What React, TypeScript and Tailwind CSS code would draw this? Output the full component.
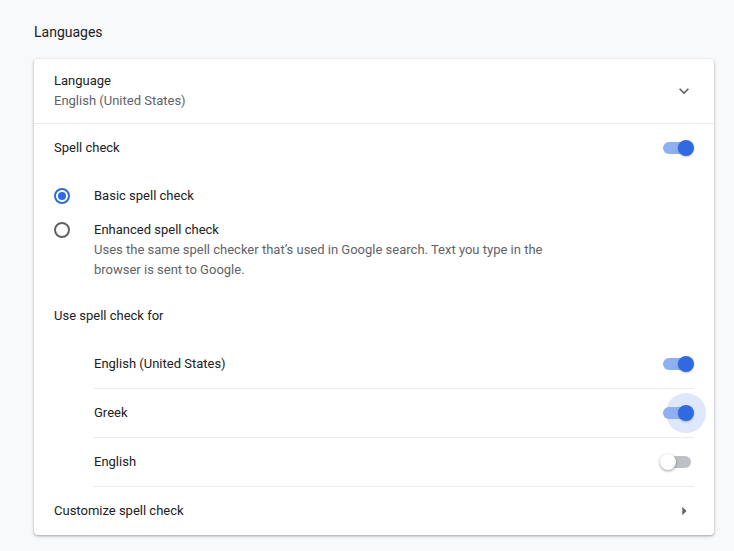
import React from "react";

function Toggle({ on, focus }: { on: boolean; focus?: boolean }) {
  return (
    <div className="relative w-[34px] h-[16px] shrink-0">
      {focus && (
        <div className="absolute w-[40px] h-[40px] rounded-full bg-[#dfe7fb] left-[6px] top-[-12px]" />
      )}
      <div
        className={
          "absolute left-[3px] top-[2px] w-[28px] h-[12px] rounded-full " +
          (on ? "bg-[#8fb0f0]" : "bg-[#bdc1c6]")
        }
      />
      <div
        className={
          "absolute top-0 w-[16px] h-[16px] rounded-full " +
          (on
            ? "left-[18px] bg-[#2f6ae0] shadow-[0_1px_2px_rgba(0,0,0,0.25)]"
            : "left-0 bg-white shadow-[0_1px_3px_rgba(0,0,0,0.4)]")
        }
      />
    </div>
  );
}

function Radio({ checked }: { checked: boolean }) {
  return (
    <div className="w-[40px] shrink-0 flex items-center">
      <div
        className={
          "w-[16px] h-[16px] rounded-full border-2 flex items-center justify-center " +
          (checked ? "border-[#2f6ae0]" : "border-[#5f6368]")
        }
      >
        {checked && <div className="w-[8px] h-[8px] rounded-full bg-[#2f6ae0]" />}
      </div>
    </div>
  );
}

export default function App() {
  return (
    <div
      className="min-h-[551px] w-[734px] bg-[#f8f9fa] text-[13px] text-[#202124]"
      style={{ fontFamily: "Roboto, 'Noto Sans', sans-serif" }}
    >
      <div className="pl-[34px] pt-[22px] pb-[17px] text-[14px] leading-[20px] text-[#202124]">
        Languages
      </div>
      <div className="ml-[34px] w-[680px] bg-white rounded-[4px] shadow-[0_1px_2px_rgba(60,64,67,0.3),0_1px_3px_1px_rgba(60,64,67,0.15)]">
        {/* Language row */}
        <div className="h-[65px] border-b border-[#e8eaed] flex items-center px-[20px]">
          <div className="flex-1 leading-[20px]">
            <div>Language</div>
            <div className="text-[#5f6368]">English (United States)</div>
          </div>
          <svg width="20" height="20" viewBox="0 0 24 24">
            <path d="M16.59 8.59L12 13.17 7.41 8.59 6 10l6 6 6-6z" fill="#5f6368" />
          </svg>
        </div>
        {/* Spell check */}
        <div className="h-[48px] flex items-center px-[20px]">
          <div className="flex-1">Spell check</div>
          <Toggle on />
        </div>
        {/* Radio group */}
        <div className="px-[20px] pt-[14px] pb-[12px] flex flex-col gap-[14px] leading-[20px]">
          <div className="flex items-center">
            <Radio checked />
            <div>Basic spell check</div>
          </div>
          <div className="flex items-start">
            <div className="h-[20px] flex items-center">
              <Radio checked={false} />
            </div>
            <div>
              <div>Enhanced spell check</div>
              <div className="text-[#5f6368] w-[460px]">
                Uses the same spell checker that’s used in Google search. Text you type in the
                browser is sent to Google.
              </div>
            </div>
          </div>
        </div>
        <div className="h-[48px] flex items-center px-[20px]">Use spell check for</div>
        <div className="pl-[60px] pr-[20px]">
          {[
            { name: "English (United States)", on: true, focus: false },
            { name: "Greek", on: true, focus: true },
            { name: "English", on: false, focus: false },
          ].map((l) => (
            <div key={l.name} className="h-[49px] border-b border-[#e8eaed] flex items-center">
              <div className="flex-1">{l.name}</div>
              <Toggle on={l.on} focus={l.focus} />
            </div>
          ))}
        </div>
        <div className="h-[48px] flex items-center px-[20px]">
          <div className="flex-1">Customize spell check</div>
          <svg width="20" height="20" viewBox="0 0 24 24">
            <path d="M10 17l5-5-5-5v10z" fill="#5f6368" />
          </svg>
        </div>
      </div>
    </div>
  );
}
